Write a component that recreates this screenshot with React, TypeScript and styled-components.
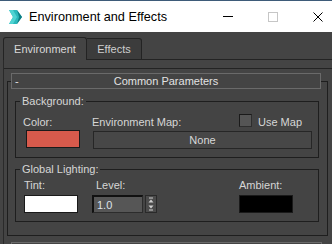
import styled, { createGlobalStyle } from "styled-components";

const GlobalStyle = createGlobalStyle`
  body {
    margin: 0;
    background: #444444;
  }
  * {
    box-sizing: border-box;
  }
`;

const Window = styled.div`
  width: 332px;
  height: 244px;
  overflow: hidden;
  display: flex;
  flex-direction: column;
  background: #444444;
  font-family: "Liberation Sans", Arial, sans-serif;
  font-size: 11px;
  color: #d6d6d6;
`;

const TitleBar = styled.div`
  height: 32px;
  flex-shrink: 0;
  display: flex;
  align-items: center;
  padding-left: 8px;
  background: #ffffff;
  border-top: 1px solid #3e5b79;
`;

const AppIcon = styled.svg`
  width: 15px;
  height: 16px;
  margin-right: 6px;
`;

const Title = styled.span`
  font-size: 12.7px;
  color: #000000;
`;

const Controls = styled.div`
  margin-left: auto;
  display: flex;
  align-items: center;
  gap: 35px;
  padding-right: 9px;
`;

const Minimize = styled.div`
  width: 10px;
  height: 1px;
  background: #000000;
`;

const Maximize = styled.div`
  width: 10px;
  height: 10px;
  border: 1px solid #c6c6c6;
`;

const CloseIcon = styled.svg`
  width: 10px;
  height: 10px;
`;

const TabRow = styled.div`
  display: flex;
  align-items: flex-end;
  padding: 5px 0 0 3px;
  margin-bottom: -1px;
  position: relative;
  z-index: 1;
`;

const Tab = styled.div<{ $active?: boolean }>`
  display: flex;
  align-items: center;
  justify-content: center;
  width: ${(p) => (p.$active ? "84px" : "55px")};
  height: ${(p) => (p.$active ? "23px" : "22px")};
  border: 1px solid #232323;
  border-left: ${(p) => (p.$active ? "1px solid #232323" : "none")};
  border-bottom: ${(p) => (p.$active ? "none" : "1px solid #232323")};
  border-radius: ${(p) => (p.$active ? "3px 3px 0 0" : "0 3px 0 0")};
  background: ${(p) => (p.$active ? "#444444" : "#3c3c3c")};
  color: ${(p) => (p.$active ? "#d8d8d8" : "#cfcfcf")};
  font-size: 11px;
`;

const TabPage = styled.div`
  flex: 1;
  margin-left: 3px;
  padding-top: 8px;
  border-top: 1px solid #232323;
  border-left: 1px solid #2a2a2a;
`;

const Scroll = styled.div`
  border-top: 1px solid #232323;
  padding-left: 3px;
`;

const Rollout = styled.div`
  width: 321px;
  margin-top: 12px;
  padding-bottom: 13px;
  border: 1px solid #1e1e1e;
`;

const RolloutHeader = styled.div`
  display: grid;
  grid-template-columns: 20px 1fr 20px;
  align-items: center;
  height: 16px;
  margin: -9px 6px 0 3px;
  border: 1px solid #6a6a6a;
  background: #444444;
  color: #e2e2e2;
  line-height: 14px;
`;

const NextHeader = styled.div`
  width: 311px;
  height: 16px;
  margin: 6px 0 0 4px;
  border: 1px solid #6a6a6a;
`;

const Toggle = styled.span`
  padding-left: 3px;
`;

const HeaderText = styled.span`
  text-align: center;
`;

const Group = styled.div<{ $gap: number }>`
  margin: ${(p) => p.$gap}px 8px 0 7px;
  padding-bottom: 8px;
  border: 1px solid #1e1e1e;
`;

const Legend = styled.div`
  width: fit-content;
  margin: -7px 0 0 4px;
  padding: 0 2px;
  line-height: 13px;
  background: #444444;
`;

const Row = styled.div<{ $top: number; $left: number }>`
  display: flex;
  padding-top: ${(p) => p.$top}px;
  padding-left: ${(p) => p.$left}px;
`;

const Col = styled.div<{ $width?: number }>`
  display: flex;
  flex-direction: column;
  width: ${(p) => (p.$width ? `${p.$width}px` : "auto")};
  flex: ${(p) => (p.$width ? "none" : "1")};
`;

const Label = styled.span<{ $indent?: number }>`
  line-height: 14px;
  padding-left: ${(p) => p.$indent ?? 0}px;
`;

const Swatch = styled.div<{ $color: string; $indent?: number }>`
  width: 54px;
  height: 18px;
  margin: 1px 0 0 ${(p) => p.$indent ?? 0}px;
  background: ${(p) => p.$color};
  border: 1px solid #1a1a1a;
`;

const MapTop = styled.div`
  display: flex;
  align-items: flex-start;
  height: 14px;
`;

const MapLabel = styled.span`
  width: 147px;
  line-height: 14px;
`;

const CheckBox = styled.div`
  width: 13px;
  height: 13px;
  margin-top: -1px;
  background: #555555;
  border: 1px solid #1a1a1a;
  border-right-color: #2e2e2e;
  border-bottom-color: #2e2e2e;
`;

const CheckText = styled.span`
  margin-left: 6px;
  line-height: 14px;
`;

const MapButton = styled.div`
  height: 18px;
  margin: 2px 6px 0 1px;
  display: flex;
  align-items: center;
  justify-content: center;
  background: #474747;
  border: 1px solid #262626;
  color: #d8d8d8;
`;

const SpinRow = styled.div`
  display: flex;
  gap: 2px;
  margin-top: 3px;
`;

const SpinField = styled.div`
  width: 51px;
  height: 18px;
  padding-left: 3px;
  display: flex;
  align-items: center;
  background: #565656;
  border-top: 2px solid #111111;
  border-left: 2px solid #111111;
  border-right: 1px solid #2c2c2c;
  border-bottom: 1px solid #2c2c2c;
  color: #dde2ea;
`;

const SpinButtons = styled.svg`
  width: 12px;
  height: 18px;
  background: #4b4b4b;
  border: 1px solid #2a2a2a;
`;

const BigSwatch = styled.div<{ $color: string }>`
  width: 54px;
  height: 18px;
  margin-top: 3px;
  background: ${(p) => p.$color};
  border: 1px solid #1a1a1a;
`;

const App = () => {
  return (
    <>
      <GlobalStyle />
      <Window>
        <TitleBar>
          <AppIcon viewBox="0 0 15 16">
            <polygon points="1,1 9,1 14,8 9,15 1,15 5,8" fill="#2bb8bb" />
            <polygon points="5,8 1,1 5,1 9,8 5,15 1,15" fill="#4fd3d2" />
            <polygon points="9,1 14,8 9,15 11,8" fill="#0f7c83" />
          </AppIcon>
          <Title>Environment and Effects</Title>
          <Controls>
            <Minimize />
            <Maximize />
            <CloseIcon viewBox="0 0 10 10">
              <path d="M0.5 0.5 L9.5 9.5 M9.5 0.5 L0.5 9.5" stroke="#000" strokeWidth="1" />
            </CloseIcon>
          </Controls>
        </TitleBar>

        <TabRow>
          <Tab $active>Environment</Tab>
          <Tab>Effects</Tab>
        </TabRow>

        <TabPage>
          <Scroll>
            <Rollout>
              <RolloutHeader>
                <Toggle>-</Toggle>
                <HeaderText>Common Parameters</HeaderText>
                <span />
              </RolloutHeader>

              <Group $gap={12}>
                <Legend>Background:</Legend>
                <Row $top={7} $left={0}>
                  <Col $width={76}>
                    <Label $indent={7}>Color:</Label>
                    <Swatch $color="#d75a4c" $indent={10} />
                  </Col>
                  <Col>
                    <MapTop>
                      <MapLabel>Environment Map:</MapLabel>
                      <CheckBox />
                      <CheckText>Use Map</CheckText>
                    </MapTop>
                    <MapButton>None</MapButton>
                  </Col>
                </Row>
              </Group>

              <Group $gap={11}>
                <Legend>Global Lighting:</Legend>
                <Row $top={2} $left={8}>
                  <Col $width={68}>
                    <Label>Tint:</Label>
                    <BigSwatch $color="#ffffff" />
                  </Col>
                  <Col $width={147}>
                    <Label $indent={4}>Level:</Label>
                    <SpinRow>
                      <SpinField>1.0</SpinField>
                      <SpinButtons viewBox="0 0 10 16">
                        <path d="M3 2 H7" stroke="#cfcfcf" strokeWidth="1" />
                        <polygon points="2.5,6.5 5,3.5 7.5,6.5" fill="#cfcfcf" />
                        <polygon points="2.5,9.5 5,12.5 7.5,9.5" fill="#cfcfcf" />
                        <path d="M3 14 H7" stroke="#cfcfcf" strokeWidth="1" />
                      </SpinButtons>
                    </SpinRow>
                  </Col>
                  <Col>
                    <Label>Ambient:</Label>
                    <BigSwatch $color="#000000" />
                  </Col>
                </Row>
              </Group>
            </Rollout>
            <NextHeader />
          </Scroll>
        </TabPage>
      </Window>
    </>
  );
};

export default App;
